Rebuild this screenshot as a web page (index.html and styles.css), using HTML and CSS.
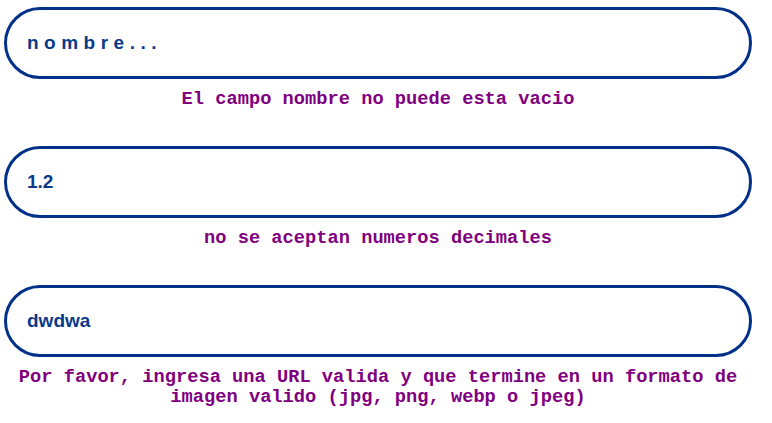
FILE: index.html
```html
<!DOCTYPE html>
<html lang="es">
<head>
<meta charset="utf-8">
<title>Formulario</title>
<link rel="stylesheet" href="styles.css">
</head>
<body>
<form class="form">
  <div class="field">
    <input class="input input-name" type="text" placeholder="nombre...">
    <h3 class="error">El campo nombre no puede esta vacio</h3>
  </div>
  <div class="field">
    <input class="input" type="text" value="1.2">
    <h3 class="error">no se aceptan numeros decimales</h3>
  </div>
  <div class="field">
    <input class="input" type="text" value="dwdwa">
    <h3 class="error">Por favor, ingresa una URL valida y que termine en un formato de imagen valido (jpg, png, webp o jpeg)</h3>
  </div>
</form>
</body>
</html>
```

FILE: styles.css
```css
html, body {
  margin: 0;
  background: #ffffff;
}
body {
  padding: 7px 20px 0 4px;
}
.form {
  display: flex;
  flex-direction: column;
  gap: 37px;
}
.field {
  display: flex;
  flex-direction: column;
  gap: 10px;
}
.input {
  box-sizing: border-box;
  width: 100%;
  height: 72px;
  border: 3px solid #003087;
  border-radius: 36px;
  padding: 0 20px;
  font-family: "Liberation Sans", Arial, sans-serif;
  font-weight: bold;
  font-size: 19px;
  color: #0a3a8a;
  background: #ffffff;
  outline: none;
}
.input::placeholder {
  color: #0a3a8a;
  opacity: 1;
  letter-spacing: 5.5px;
}
.error {
  margin: 0;
  font-family: "Liberation Mono", "Courier New", monospace;
  font-weight: bold;
  font-size: 18.72px;
  line-height: 20px;
  color: #800080;
  text-align: center;
}
```
